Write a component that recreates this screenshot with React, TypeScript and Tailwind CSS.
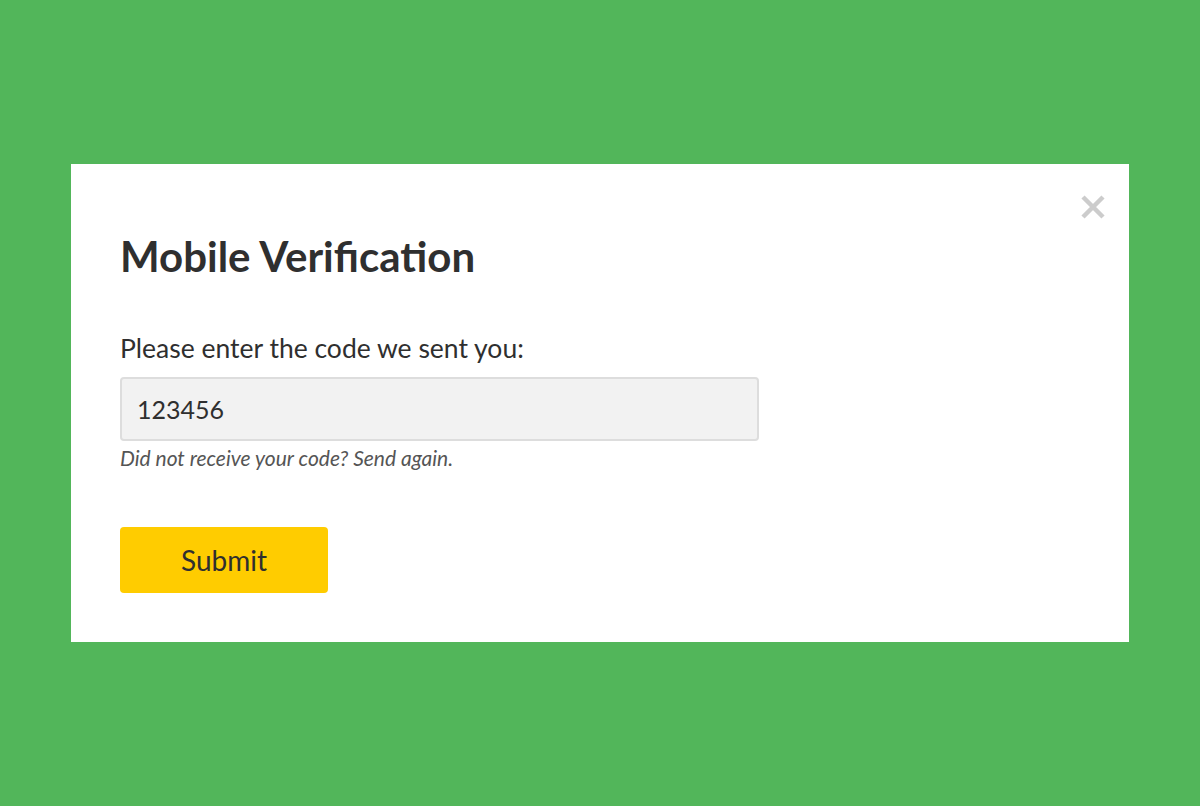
export default function App() {
  return (
    <div className="flex h-[806px] w-full items-center justify-center bg-[#52b65a] font-['Lato',sans-serif] text-[#2f2f2f]">
      <div className="relative h-[478px] w-[1058px] bg-white px-[49px] pt-[66px]">
        <button className="absolute right-[22px] top-[29px] text-[#cccccc]" aria-label="Close">
          <svg width="28" height="28" viewBox="0 0 28 28" fill="none">
            <path d="M4 4 L24 24 M24 4 L4 24" stroke="currentColor" strokeWidth="4.5" />
          </svg>
        </button>
        <h1 className="text-[42px] font-bold leading-[52px]">Mobile Verification</h1>
        <label className="mt-[50px] block text-[26.5px] leading-[32px]">Please enter the code we sent you:</label>
        <input
          defaultValue="123456"
          className="mt-[13px] block h-[64px] w-[639px] rounded-[4px] border-2 border-[#dddddd] bg-[#f2f2f2] px-[15px] text-[25px] text-[#2f2f2f] outline-none"
        />
        <p className="mt-[4px] text-[21px] italic leading-[26px] text-[#555555]">
          Did not receive your code? Send again.
        </p>
        <button className="mt-[56px] h-[66px] w-[208px] rounded-[4px] bg-[#ffcc00] text-[28px] text-[#2f2f2f]">
          Submit
        </button>
      </div>
    </div>
  );
}
